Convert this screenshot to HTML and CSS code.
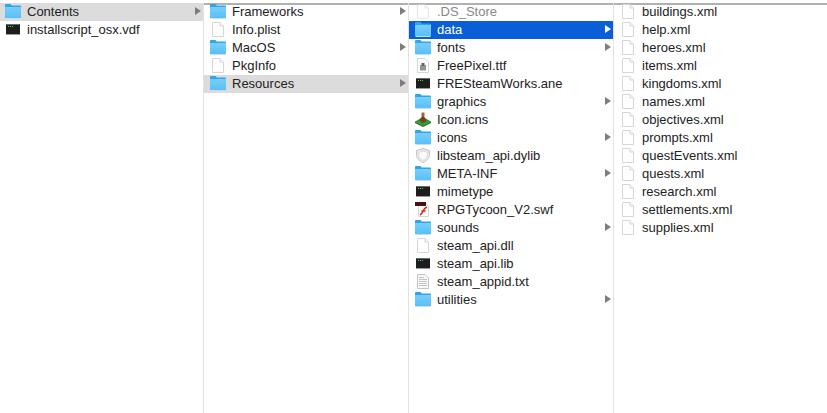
FILE: index.html
```html
<!DOCTYPE html>
<html lang="en">
<head>
<meta charset="utf-8">
<title>Finder columns</title>
<link rel="stylesheet" href="styles.css">
</head>
<body>
<svg class="defs" width="0" height="0" aria-hidden="true">
  <defs>
    <linearGradient id="fold" x1="0" y1="0" x2="0" y2="1"><stop offset="0" stop-color="#79cffb"/><stop offset="1" stop-color="#58bff8"/></linearGradient>
    <symbol id="folder" viewBox="0 0 16 16">
      <path d="M0 2a1 1 0 0 1 1-1h4.500l1.300 1.500h8.200a1 1 0 0 1 1 1v10.500a1 1 0 0 1-1 1h-14a1 1 0 0 1-1-1z" fill="#2fa5ec"/>
      <path d="M0 4h16v10a1 1 0 0 1-1 1h-14a1 1 0 0 1-1-1z" fill="url(#fold)"/>
      <path d="M0.500 15.500h15" stroke="#c2e0f0" stroke-width="1"/>
    </symbol>
    <symbol id="doc" viewBox="0 0 16 16">
      <path d="M2.500 1.500h7.500l3.500 3.500v10.500h-11z" fill="#fff" stroke="#d6d6d6"/>
      <path d="M10 1.500v3.500h3.500" fill="#f5f5f5" stroke="#d6d6d6"/>
    </symbol>
    <symbol id="term" viewBox="0 0 16 16">
      <rect x="1" y="3" width="14" height="11" rx="1" fill="#1e1e1e"/>
      <rect x="1" y="3" width="14" height="1" fill="#6b6b6b"/>
      <rect x="1" y="13" width="14" height="1" fill="#9a9a9a"/>
      <path d="M3 5.500h1M5 5.500h1M7 5.500h1" stroke="#3fe05a"/>
    </symbol>
    <symbol id="txt" viewBox="0 0 16 16">
      <path d="M2.500 1.500h7.500l3.500 3.500v10.500h-11z" fill="#f8f8f8" stroke="#c4c4c4"/>
      <path d="M4 4.500h5M4 6.500h8M4 8.500h8M4 10.500h8M4 12.500h8" stroke="#c4c4c4"/>
    </symbol>
    <symbol id="font" viewBox="0 0 16 16">
      <path d="M2.500 1.500h7.500l3.500 3.500v10.500h-11z" fill="#fff" stroke="#d6d6d6"/>
      <rect x="5" y="8" width="6" height="5.500" fill="#8f9698"/>
      <rect x="6.500" y="6" width="3" height="3" fill="#5f6668"/>
    </symbol>
    <symbol id="game" viewBox="0 0 16 16">
      <path d="M0 10.500l8-4.500 8 4.500-8 4-8-4z" fill="#2f9a2c"/>
      <path d="M0 10.500l8 4v1.500l-8-4zM16 10.500l-8 4v1.500l8-4z" fill="#1d6a1f"/>
      <path d="M4.500 9.500l3.500-6 3.500 6-3.500 2.500z" fill="#7a3f22"/>
      <path d="M6.500 1.500h3v4h-3z" fill="#a5633a"/>
    </symbol>
    <symbol id="shield" viewBox="0 0 16 16">
      <path d="M8 1.500l6.500 2v5c0 3-3 5.500-6.500 7-3.500-1.500-6.500-4-6.500-7v-5z" fill="#e9e9e9" stroke="#c6c6c6"/>
      <path d="M8 4l4.300 1.300v3.200c0 2-2 3.800-4.300 4.800-2.300-1-4.300-2.800-4.300-4.800v-3.200z" fill="#fafafa" stroke="#dcdcdc"/>
    </symbol>
    <symbol id="swf" viewBox="0 0 16 16">
      <path d="M3.500 1.500h7l3 3.500v10.500h-10z" fill="#fff" stroke="#d6d6d6"/>
      <rect x="0" y="1" width="11" height="4" fill="#4a1114"/>
      <path d="M5 14c3-1 3-7 7-8M6.500 10h4" stroke="#e3231b" stroke-width="1.600" fill="none"/>
    </symbol>
  </defs>
</svg>
<main class="browser">
  <ul class="column column-first">
    <li class="row row-parent"><svg class="icon"><use href="#folder"/></svg><span class="name">Contents</span><span class="arrow"></span></li>
    <li class="row"><svg class="icon"><use href="#term"/></svg><span class="name">installscript_osx.vdf</span></li>
  </ul>
  <ul class="column">
    <li class="row"><svg class="icon"><use href="#folder"/></svg><span class="name">Frameworks</span><span class="arrow"></span></li>
    <li class="row"><svg class="icon"><use href="#doc"/></svg><span class="name">Info.plist</span></li>
    <li class="row"><svg class="icon"><use href="#folder"/></svg><span class="name">MacOS</span><span class="arrow"></span></li>
    <li class="row"><svg class="icon"><use href="#doc"/></svg><span class="name">PkgInfo</span></li>
    <li class="row row-parent"><svg class="icon"><use href="#folder"/></svg><span class="name">Resources</span><span class="arrow"></span></li>
  </ul>
  <ul class="column">
    <li class="row row-hidden"><svg class="icon"><use href="#doc"/></svg><span class="name">.DS_Store</span></li>
    <li class="row row-active"><svg class="icon"><use href="#folder"/></svg><span class="name">data</span><span class="arrow"></span></li>
    <li class="row"><svg class="icon"><use href="#folder"/></svg><span class="name">fonts</span><span class="arrow"></span></li>
    <li class="row"><svg class="icon"><use href="#font"/></svg><span class="name">FreePixel.ttf</span></li>
    <li class="row"><svg class="icon"><use href="#term"/></svg><span class="name">FRESteamWorks.ane</span></li>
    <li class="row"><svg class="icon"><use href="#folder"/></svg><span class="name">graphics</span><span class="arrow"></span></li>
    <li class="row"><svg class="icon"><use href="#game"/></svg><span class="name">Icon.icns</span></li>
    <li class="row"><svg class="icon"><use href="#folder"/></svg><span class="name">icons</span><span class="arrow"></span></li>
    <li class="row"><svg class="icon"><use href="#shield"/></svg><span class="name">libsteam_api.dylib</span></li>
    <li class="row"><svg class="icon"><use href="#folder"/></svg><span class="name">META-INF</span><span class="arrow"></span></li>
    <li class="row"><svg class="icon"><use href="#term"/></svg><span class="name">mimetype</span></li>
    <li class="row"><svg class="icon"><use href="#swf"/></svg><span class="name">RPGTycoon_V2.swf</span></li>
    <li class="row"><svg class="icon"><use href="#folder"/></svg><span class="name">sounds</span><span class="arrow"></span></li>
    <li class="row"><svg class="icon"><use href="#doc"/></svg><span class="name">steam_api.dll</span></li>
    <li class="row"><svg class="icon"><use href="#term"/></svg><span class="name">steam_api.lib</span></li>
    <li class="row"><svg class="icon"><use href="#txt"/></svg><span class="name">steam_appid.txt</span></li>
    <li class="row"><svg class="icon"><use href="#folder"/></svg><span class="name">utilities</span><span class="arrow"></span></li>
  </ul>
  <ul class="column column-last">
    <li class="row"><svg class="icon"><use href="#doc"/></svg><span class="name">buildings.xml</span></li>
    <li class="row"><svg class="icon"><use href="#doc"/></svg><span class="name">help.xml</span></li>
    <li class="row"><svg class="icon"><use href="#doc"/></svg><span class="name">heroes.xml</span></li>
    <li class="row"><svg class="icon"><use href="#doc"/></svg><span class="name">items.xml</span></li>
    <li class="row"><svg class="icon"><use href="#doc"/></svg><span class="name">kingdoms.xml</span></li>
    <li class="row"><svg class="icon"><use href="#doc"/></svg><span class="name">names.xml</span></li>
    <li class="row"><svg class="icon"><use href="#doc"/></svg><span class="name">objectives.xml</span></li>
    <li class="row"><svg class="icon"><use href="#doc"/></svg><span class="name">prompts.xml</span></li>
    <li class="row"><svg class="icon"><use href="#doc"/></svg><span class="name">questEvents.xml</span></li>
    <li class="row"><svg class="icon"><use href="#doc"/></svg><span class="name">quests.xml</span></li>
    <li class="row"><svg class="icon"><use href="#doc"/></svg><span class="name">research.xml</span></li>
    <li class="row"><svg class="icon"><use href="#doc"/></svg><span class="name">settlements.xml</span></li>
    <li class="row"><svg class="icon"><use href="#doc"/></svg><span class="name">supplies.xml</span></li>
  </ul>
</main>
</body>
</html>
```
FILE: styles.css
```css
* { box-sizing: border-box; }
html, body { margin: 0; height: 100%; }
body {
  background: #fff;
  color: #222;
  font-family: "Liberation Sans", Arial, sans-serif;
  font-size: 13px;
  line-height: 17px;
  overflow: hidden;
}
.defs { position: absolute; }
.browser {
  display: flex;
  height: 413px;
  border-top: 3px solid #fff;
  box-shadow: inset 0 2px 0 #b0b0b0;
}
.column {
  list-style: none;
  margin: 0;
  padding: 0;
  width: 205px;
  flex: none;
  border-right: 1px solid #e2e2e2;
}
.column-first { width: 204px; }
.column-last { flex: 1; border-right: 0; }
.row {
  display: flex;
  align-items: flex-start;
  height: 18px;
  padding: 0 2px 0 6px;
  white-space: nowrap;
}
.column-first .row { padding-left: 5px; }
.icon { width: 16px; height: 16px; flex: none; margin-right: 6px; }
.name { flex: 1; }
.arrow {
  width: 0;
  height: 0;
  flex: none;
  margin-top: 4px;
  border-left: 6px solid #7d7d7d;
  border-top: 4px solid transparent;
  border-bottom: 4px solid transparent;
}
.row-parent { background: #dcdcdc; }
.row-active { background: #0a5fd8; color: #fff; }
.row-active .arrow { border-left-color: #fff; }
.row-hidden .name { color: #888; }
.row-hidden .icon { opacity: 0.6; }
```
